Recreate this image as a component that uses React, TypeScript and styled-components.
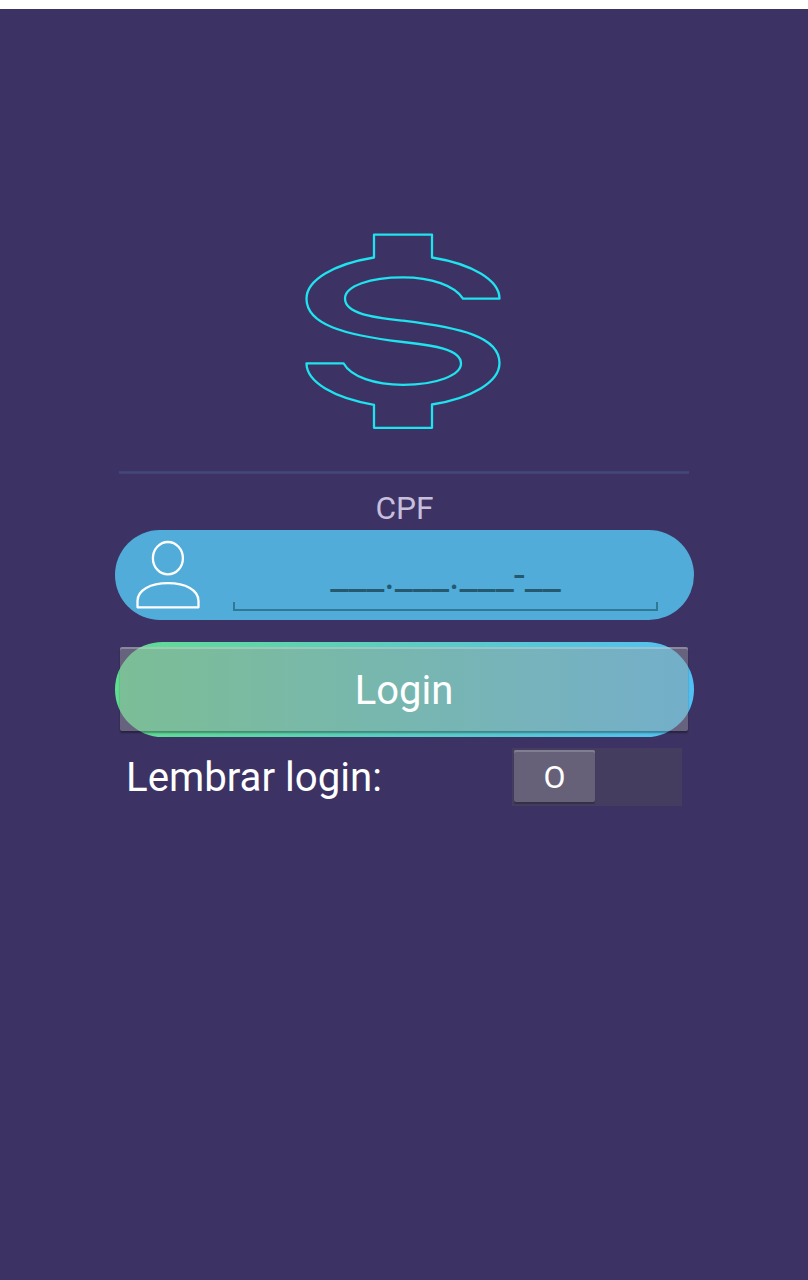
import React from "react";
import styled, { createGlobalStyle } from "styled-components";

const GlobalStyle = createGlobalStyle`
  * { box-sizing: border-box; }
  body { margin: 0; background: #fff; font-family: Roboto, sans-serif; }
`;

const Screen = styled.main`
  height: 1271px;
  margin-top: 9px;
  padding-top: 216px;
  background: #3c3364;
  display: flex;
  flex-direction: column;
  align-items: center;
  overflow: hidden;
`;

const Logo = styled.svg`
  display: block;
  width: 215px;
  height: 215px;
  flex: none;
  margin-right: 3px;
`;

const Divider = styled.hr`
  width: 570px;
  height: 3px;
  margin: 31px 0 0;
  border: 0;
  background: linear-gradient(#404073, #454779 50%, #404073);
`;

const FieldLabel = styled.label`
  margin-top: 16px;
  height: 40px;
  padding-left: 1px;
  line-height: 38px;
  font-size: 31.7px;
  color: #c7bfdc;
`;

const Field = styled.div`
  width: 579px;
  height: 90px;
  border-radius: 45px;
  background: #51acd9;
  display: flex;
  align-items: flex-start;
`;

const UserIcon = styled.svg`
  display: block;
  width: 66px;
  height: 70px;
  margin: 10px 0 0 20.5px;
`;

const MaskInput = styled.div`
  width: 425px;
  height: 45px;
  margin: 36px 0 0 32px;
  display: flex;
  flex-direction: column;
  justify-content: space-between;
`;

const Mask = styled.span`
  height: 36px;
  line-height: 20px;
  text-align: center;
  font-size: 40px;
  color: #255970;
`;

const Bracket = styled.span`
  height: 9px;
  border: 2px solid #2f7896;
  border-top: 0;
`;

const LoginButton = styled.button`
  width: 579px;
  height: 95px;
  margin-top: 22px;
  padding: 0;
  border: 0;
  border-radius: 47.5px;
  background: linear-gradient(90deg, #62dc92, #53c0f3);
  display: flex;
  justify-content: center;
  align-items: flex-start;
  font-family: inherit;
`;

const ButtonFace = styled.span`
  flex: none;
  width: 568px;
  height: 84px;
  margin-top: 5px;
  border-radius: 2px;
  background: rgba(155, 155, 155, 0.46);
  box-shadow: inset 0 2px 0 rgba(255, 255, 255, 0.24), 0 2px 2px rgba(0, 0, 0, 0.35);
  color: #fff;
  font-size: 40px;
  line-height: 88px;
  text-align: center;
`;

const RememberRow = styled.div`
  width: 556px;
  height: 58px;
  margin-top: 11px;
  display: flex;
  justify-content: space-between;
`;

const RememberLabel = styled.span`
  color: #fff;
  font-size: 40.2px;
  line-height: 60px;
`;

const Switch = styled.div`
  width: 170px;
  height: 58px;
  padding: 2px;
  background: #443d60;
`;

const Thumb = styled.div`
  width: 81px;
  height: 52px;
  border-radius: 2px;
  background: #666178;
  box-shadow: inset 0 2px 0 #827e91, 0 2px 1px #363047;
  color: #fff;
  font-size: 32px;
  line-height: 54px;
  text-align: center;
`;

export default function App() {
  return (
    <>
      <GlobalStyle />
      <Screen>
        <Logo viewBox="295 225 215 215" fill="none" stroke="#1fe3ee" strokeWidth="2.3" strokeLinejoin="round">
          <path d="M374 234.7H432V257.5C472 264 499.5 280 499.5 298.7H463C455 285.500 431 277.300 403 277.300C370 277.300 345 286 345 298.500C345 314.500 376 317.500 403 320.700C462 328 499.500 337 499.500 363C499.500 382 472 398 432 404.500V427.800H374V404.800C334 398 306.500 382 306.500 363.300H343.500C351 377 375 384.800 403 384.800C437 384.800 461 375 461 363.500C461 348 428 345 403 342C343 335 306.500 324 306.500 298.700C306.500 280 334 264 374 257.500Z" />
        </Logo>
        <Divider />
        <FieldLabel>CPF</FieldLabel>
        <Field>
          <UserIcon viewBox="135.5 540 66 70" fill="none" stroke="#fff" strokeWidth="2.3" strokeLinejoin="round">
            <ellipse cx="168.400" cy="558.200" rx="15" ry="16.200" />
            <path d="M138 607.300V601C138 590 151 583.200 168.500 583.200S199 590 199 601V607.300Z" />
          </UserIcon>
          <MaskInput>
            <Mask>___.___.___-__</Mask>
            <Bracket />
          </MaskInput>
        </Field>
        <LoginButton>
          <ButtonFace>Login</ButtonFace>
        </LoginButton>
        <RememberRow>
          <RememberLabel>Lembrar login:</RememberLabel>
          <Switch>
            <Thumb>O</Thumb>
          </Switch>
        </RememberRow>
      </Screen>
    </>
  );
}
